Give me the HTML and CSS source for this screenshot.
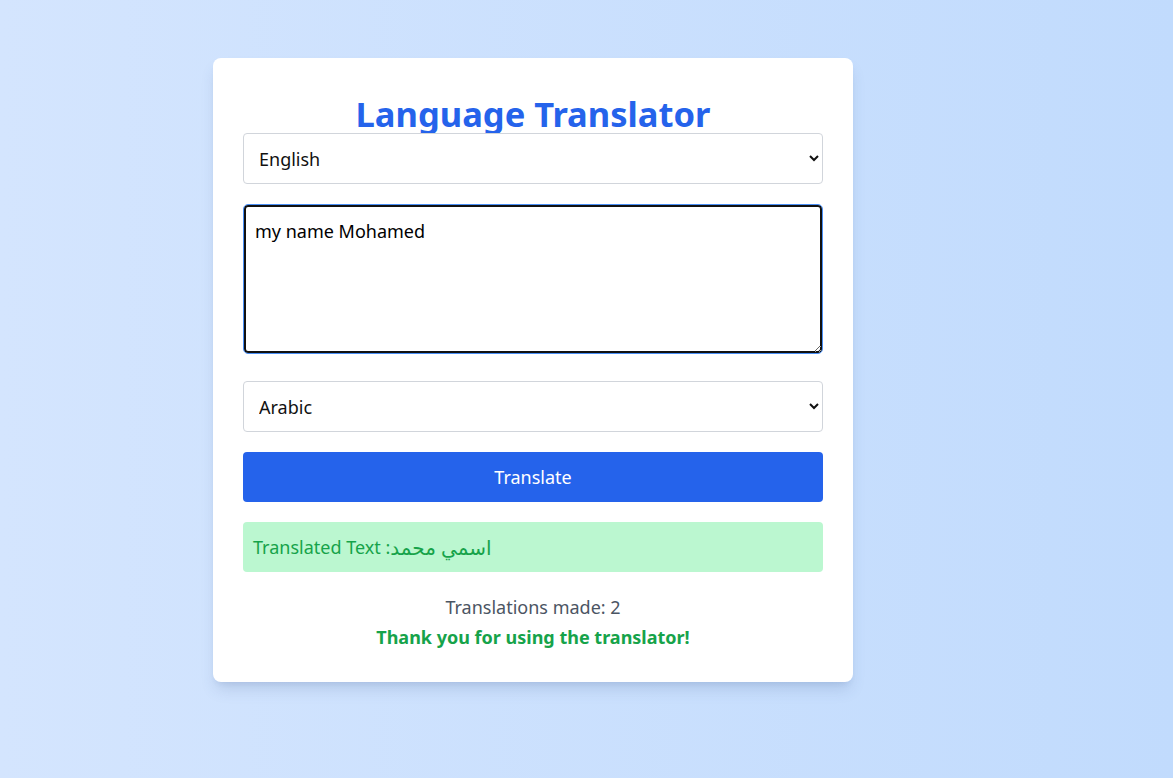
FILE: index.html
```html
<!DOCTYPE html>
<html lang="en">
<head>
<meta charset="utf-8">
<title>Language Translator</title>
<link rel="stylesheet" href="styles.css">
</head>
<body>
<main class="card">
  <h1 class="title">Language Translator</h1>
  <select class="field select">
    <option>English</option>
    <option>Arabic</option>
    <option>French</option>
  </select>
  <textarea class="field input">my name Mohamed</textarea>
  <select class="field select">
    <option>Arabic</option>
    <option>English</option>
    <option>French</option>
  </select>
  <button class="btn">Translate</button>
  <p class="result">Translated Text :<span class="ar">اسمي محمد</span></p>
  <p class="count">Translations made: 2</p>
  <p class="thanks">Thank you for using the translator!</p>
</main>
</body>
</html>
```

FILE: styles.css
```css
* { box-sizing: border-box; }
html, body { height: 100%; }
body {
  margin: 0;
  background: linear-gradient(to right, #d4e5fe, #c1dbfd);
  font-family: "Noto Sans", "DejaVu Sans", sans-serif;
  padding: 58px 0 0 213px;
}
.card {
  width: 640px;
  background: #fff;
  border-radius: 8px;
  padding: 30px;
  box-shadow: 0 10px 15px -3px rgba(60, 90, 140, 0.18), 0 4px 6px -4px rgba(60, 90, 140, 0.15);
  display: flex;
  flex-direction: column;
}
.title {
  margin: 0;
  font-size: 34.5px;
  line-height: 45px;
  padding-top: 3px;
  margin-bottom: -3px;
  font-weight: 700;
  color: #2563eb;
  text-align: center;
}
.field {
  width: 100%;
  font-family: inherit;
  font-size: 18px;
  color: #111;
}
.select {
  height: 51px;
  padding: 0 11px;
  border: 1px solid #d1d5db;
  border-radius: 4px;
  background: #fff;
}
.input {
  margin-top: 20px;
  height: 150px;
  padding: 14px 11px 10px;
  border: 1px solid #4a8ff5;
  border-radius: 5px;
  box-shadow: inset 0 0 0 2px #111;
  outline: none;
  line-height: 1.4;
  margin-bottom: 27px;
  color: #000;
}
.btn {
  margin-top: 20px;
  height: 50px;
  border: none;
  border-radius: 4px;
  background: #2563eb;
  color: #fff;
  font-family: inherit;
  font-size: 18px;
}
.result {
  margin: 20px 0 0;
  height: 50px;
  padding: 0 10px;
  display: flex;
  align-items: center;
  background: #bbf7d0;
  border-radius: 4px;
  color: #16a34a;
  font-size: 18px;
}
.ar {
  font-size: 20px;
}
.count {
  margin: 20px 0 0;
  text-align: center;
  color: #4b5563;
  font-size: 18px;
  line-height: 30px;
}
.thanks {
  margin: 0;
  text-align: center;
  color: #16a34a;
  font-weight: 700;
  font-size: 18px;
  line-height: 30px;
}
```
